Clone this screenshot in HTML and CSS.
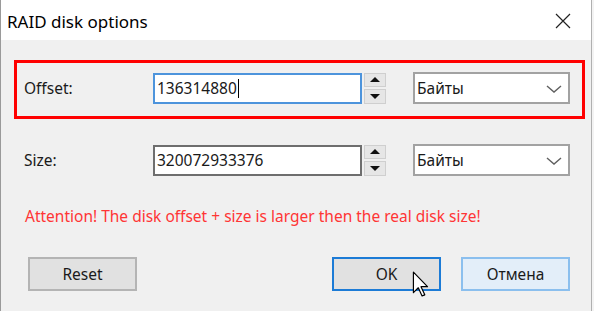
FILE: index.html
```html
<!DOCTYPE html>
<html>
<head>
    <title>RAID disk options</title>
    <link rel="stylesheet" href="styles.css">
</head>
<body>
    <div class="window">
        <div class="titlebar">
            <span class="title">RAID disk options</span>
            <svg class="close" width="16" height="16" viewBox="0 0 16 16">
                <path d="M1 1 L15 15 M15 1 L1 15" stroke="#222" stroke-width="1.2" fill="none"/>
            </svg>
        </div>
        <div class="content">
            <div class="row highlight">
                <label class="label">Offset:</label>
                <div class="field focused">136314880<span class="caret"></span></div>
                <div class="spin">
                    <div class="spin-btn"><span class="arrow-up"></span></div>
                    <div class="spin-btn"><span class="arrow-down"></span></div>
                </div>
                <div class="combo">
                    <span>Байты</span>
                    <svg width="16" height="10" viewBox="0 0 16 10">
                        <path d="M1 2 L8 8 L15 2" stroke="#606060" stroke-width="1.4" fill="none"/>
                    </svg>
                </div>
            </div>
            <div class="row">
                <label class="label">Size:</label>
                <div class="field">320072933376</div>
                <div class="spin">
                    <div class="spin-btn"><span class="arrow-up"></span></div>
                    <div class="spin-btn"><span class="arrow-down"></span></div>
                </div>
                <div class="combo">
                    <span>Байты</span>
                    <svg width="16" height="10" viewBox="0 0 16 10">
                        <path d="M1 2 L8 8 L15 2" stroke="#606060" stroke-width="1.4" fill="none"/>
                    </svg>
                </div>
            </div>
            <p class="warning">Attention! The disk offset + size is larger then the real disk size!</p>
            <div class="buttons">
                <button class="btn">Reset</button>
                <div class="spacer"></div>
                <button class="btn default">OK</button>
                <button class="btn hover">Отмена</button>
            </div>
        </div>
        <svg class="cursor" width="16" height="24" viewBox="0 0 16 24">
            <path d="M1 1 L1 20 L5.5 15.5 L9 23 L11.5 22 L8 14.5 L14 14.5 Z" fill="#fff" stroke="#000" stroke-width="1.1" stroke-linejoin="round"/>
        </svg>
    </div>
</body>
</html>
```

FILE: styles.css
```css
html, body {
    margin: 0;
    padding: 0;
}
body {
    background-color: #f3f3f3;
    font-family: "Noto Sans", "Open Sans", sans-serif;
    color: #1a1a1a;
}
.window {
    position: relative;
    width: 590px;
    height: 311px;
    background-color: #f0f0f0;
    border-left: 1px solid #9a9a9a;
    border-right: 1px solid #b0b0b0;
}
.titlebar {
    height: 40px;
    background-color: #fff;
    display: flex;
    align-items: center;
    justify-content: space-between;
    padding: 0 20px 0 6px;
}
.title {
    font-size: 17px;
    color: #000;
    margin-top: 2px;
}
.close {
    margin-top: 1px;
}
.content {
    padding: 20px 6px 0 13px;
}
.row {
    display: flex;
    align-items: center;
    border: 3px solid transparent;
    padding: 9px 12px 12px 7px;
}
.highlight {
    border-color: #ff0000;
}
.row + .row {
    margin-top: 13px;
}
.label {
    width: 129px;
    font-size: 15.5px;
}
.field {
    box-sizing: border-box;
    width: 209px;
    height: 31px;
    background-color: #fff;
    border: 2px solid #6e6e6e;
    padding: 0 0 0 2px;
    font-size: 15.5px;
    line-height: 27px;
    display: flex;
    align-items: center;
}
.focused {
    border-color: #4d94dc;
}
.caret {
    display: inline-block;
    width: 1px;
    height: 19px;
    background-color: #000;
    margin-left: 1px;
}
.spin {
    display: flex;
    flex-direction: column;
    gap: 2px;
    margin-left: 2px;
    height: 31px;
}
.spin-btn {
    box-sizing: border-box;
    width: 22px;
    height: 14.5px;
    background-color: #e6e6e6;
    border: 1px solid #cfcfcf;
    display: flex;
    align-items: center;
    justify-content: center;
}
.arrow-up, .arrow-down {
    width: 0;
    height: 0;
    border-left: 5px solid transparent;
    border-right: 5px solid transparent;
}
.arrow-up {
    border-bottom: 5px solid #111;
}
.arrow-down {
    border-top: 5px solid #111;
}
.combo {
    box-sizing: border-box;
    width: 157px;
    height: 32px;
    margin-left: 27px;
    background-color: #fff;
    border: 2px solid #a2a2a2;
    display: flex;
    align-items: center;
    justify-content: space-between;
    padding: 0 6px 0 2px;
    font-size: 15.5px;
}
.combo svg {
    margin-top: 1px;
}
.warning {
    margin: 15px 0 0 11px;
    font-size: 15.5px;
    line-height: 20px;
    color: #ff3535;
}
.buttons {
    display: flex;
    gap: 20px;
    margin: 31px 0 0 14px;
    width: 542px;
}
.spacer {
    flex: 1;
}
.btn {
    box-sizing: border-box;
    width: 109px;
    height: 34px;
    background-color: #e1e1e1;
    border: 2px solid #b4b4b4;
    font-family: "Noto Sans", "Open Sans", sans-serif;
    font-size: 15.5px;
    color: #1a1a1a;
    padding: 0;
}
.default {
    border-color: #1c7bd6;
}
.hover {
    background-color: #e3eef9;
    border-color: #8bbfee;
}
.cursor {
    position: absolute;
    left: 410px;
    top: 271px;
    width: 20px;
    height: 26px;
}
```
